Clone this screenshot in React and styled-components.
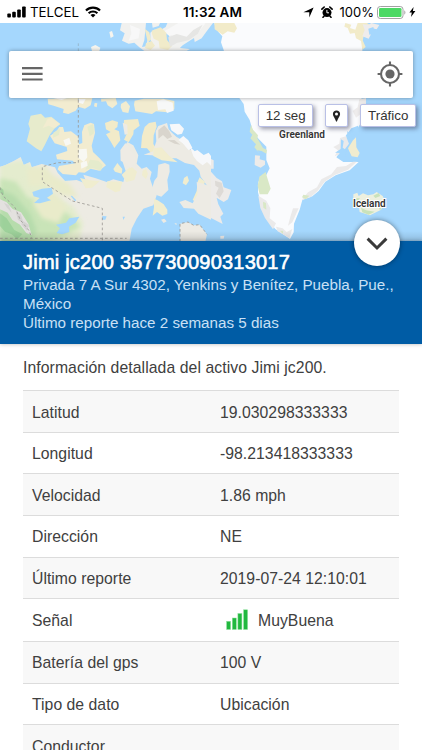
import React from "react";
import styled, { createGlobalStyle } from "styled-components";

const details = [
  { label: "Latitud", value: "19.030298333333" },
  { label: "Longitud", value: "-98.213418333333" },
  { label: "Velocidad", value: "1.86 mph" },
  { label: "Dirección", value: "NE" },
  { label: "Último reporte", value: "2019-07-24 12:10:01" },
  { label: "Señal", value: "MuyBuena", signal: true },
  { label: "Batería del gps", value: "100 V" },
  { label: "Tipo de dato", value: "Ubicación" },
  { label: "Conductor", value: "" }
];

const App = () => {
  return (
    <Screen>
      <GlobalStyle />
      <StatusBar />
      <MapArea>
        <MapDrawing />
        <SearchBar>
          <MenuIcon />
          <LocateIcon />
        </SearchBar>
        <MapControls>
          <MapButton>12 seg</MapButton>
          <MapButton $icon aria-label="Marcador">
            <PinIcon />
          </MapButton>
          <MapButton>Tráfico</MapButton>
        </MapControls>
      </MapArea>
      <AssetHeader>
        <CollapseButton aria-label="Cerrar">
          <ChevronIcon />
        </CollapseButton>
        <AssetName>Jimi jc200 357730090313017</AssetName>
        <AssetText>
          Privada 7 A Sur 4302, Yenkins y Benítez, Puebla, Pue., México
        </AssetText>
        <AssetText>Último reporte hace 2 semanas 5 dias</AssetText>
      </AssetHeader>
      <Details>
        <Intro>Información detallada del activo Jimi jc200.</Intro>
        <Table>
          {details.map((item, i) => (
            <Row key={item.label} $odd={i % 2 === 0} $tall={item.signal}>
              <Cell>{item.label}</Cell>
              <Cell>
                {item.signal && <SignalIcon />}
                {item.value}
              </Cell>
            </Row>
          ))}
        </Table>
      </Details>
    </Screen>
  );
};

export default App;

const StatusBar = () => (
  <Status>
    <StatusGroup>
      <svg width="19" height="12" viewBox="0 0 19 12">
        <rect x="0.3" y="7.6" width="3.6" height="3.9" rx="0.9" />
        <rect x="5.2" y="5.8" width="3.6" height="5.7" rx="0.9" />
        <rect x="10.2" y="3.4" width="3.6" height="8.1" rx="0.9" />
        <rect x="15.1" y="0.4" width="3.6" height="11.1" rx="0.9" />
      </svg>
      <Carrier>TELCEL</Carrier>
      <WifiSvg width="16" height="12" viewBox="0 0 16 12">
        <path d="M0.2 3.7a11 11 0 0 1 15.6 0l-1.5 1.6a8.9 8.9 0 0 0-12.6 0z" />
        <path d="M2.9 6.5a7.2 7.2 0 0 1 10.2 0l-1.5 1.5a5.1 5.1 0 0 0-7.2 0z" />
        <path d="M5.5 9.1a3.6 3.6 0 0 1 5 0L8 11.6z" />
      </WifiSvg>
    </StatusGroup>
    <Clock>11:32 AM</Clock>
    <StatusGroup>
      <svg width="11" height="11" viewBox="0 0 11 11">
        <path d="M10.6 0.4L6.3 10.6V5.2H0.4z" />
      </svg>
      <AlarmSvg width="12" height="12" viewBox="0 0 12 12">
        <circle cx="6" cy="6.6" r="4.5" />
        <path
          d="M0.9 3.2L3.2 1M11.1 3.2L8.8 1M3 10.2l-1 1.1M9 10.2l1 1.1"
          stroke="#000"
          strokeWidth="1.6"
          strokeLinecap="round"
        />
        <path d="M5.9 3.9v2.9H8" fill="none" stroke="#fff" strokeWidth="1" />
      </AlarmSvg>
      <Percent>100%</Percent>
      <BatterySvg width="29" height="13" viewBox="0 0 29 13">
        <rect
          x="0.5"
          y="0.5"
          width="25.5"
          height="12"
          rx="2.8"
          fill="#fff"
          stroke="#a2a2a2"
        />
        <rect x="2" y="2" width="22.5" height="9" rx="1.3" fill="#4cd964" />
        <path d="M27.3 4.3c1.5.7 1.5 3.7 0 4.4z" fill="#a2a2a2" />
      </BatterySvg>
      <svg width="7" height="10" viewBox="0 0 7 10">
        <path d="M4.6 0L0.4 5.6h2.4L2 10l4.4-5.9H3.9z" />
      </svg>
    </StatusGroup>
  </Status>
);

const MenuIcon = () => (
  <svg width="21" height="14" viewBox="0 0 21 14">
    <path d="M0 1.2h20.6M0 6.8h20.6M0 12.5h20.6" stroke="#666" strokeWidth="2.2" />
  </svg>
);

const LocateIcon = () => (
  <svg width="26" height="26" viewBox="0 0 26 26">
    <circle cx="13" cy="13" r="9" fill="none" stroke="#666" strokeWidth="2.1" />
    <circle cx="13" cy="13" r="4.6" fill="#666" />
    <path
      d="M13 0.6v3.6M13 21.8v3.6M0.6 13h3.6M21.8 13h3.6"
      stroke="#666"
      strokeWidth="2.1"
    />
  </svg>
);

const PinIcon = () => (
  <svg width="9" height="14" viewBox="0 0 9 14">
    <path
      fillRule="evenodd"
      fill="#222"
      d="M4.5 1.6C2.4 1.6 0.9 3 0.9 5C0.9 7.200 3.100 9.200 4 12.300c0.100 0.500 0.900 0.500 1 0C5.900 9.200 8.100 7.200 8.100 5C8.100 3 6.600 1.600 4.500 1.600zM4.500 3.500a1.500 1.500 0 1 1 0 3a1.500 1.500 0 0 1 0-3z"
    />
  </svg>
);

const ChevronIcon = () => (
  <svg width="22" height="14" viewBox="0 0 22 14">
    <path d="M1.6 1.6L11 11L20.4 1.6" fill="none" stroke="#3a3a3a" strokeWidth="3" />
  </svg>
);

const SignalIcon = () => (
  <SignalSvg width="23" height="22" viewBox="0 0 23 22">
    <g fill="#21b83f" stroke="#8fe09d" strokeWidth="0.5">
      <rect x="0.6" y="12.3" width="4" height="8.2" />
      <rect x="6.3" y="9" width="4" height="11.5" />
      <rect x="11.9" y="4.5" width="4" height="16" />
      <rect x="17.6" y="0.8" width="4" height="19.7" />
    </g>
  </SignalSvg>
);

/* Map units are a third of a pixel. */
const MapDrawing = () => (
  <MapSvg viewBox="0 69 1266 654" preserveAspectRatio="none">
    <defs>
      <linearGradient id="mapShade" x1="0" y1="0" x2="0" y2="1">
        <stop offset="0" stopColor="#000" stopOpacity="0" />
        <stop offset="1" stopColor="#000" stopOpacity="0.12" />
      </linearGradient>
      <filter id="soft" x="-10%" y="-10%" width="120%" height="120%">
        <feGaussianBlur stdDeviation="7" />
      </filter>
      <clipPath id="mainland">
        <path d="M0 200l15-4 25-12 22-13 9 24 19-9 5 16 30-10 40 10 8 16 22 25 35-3 32 13-12-29 35 10 35 12 20-8 30 8 8-30-10-30 4-45 10-15 18 10 15 30-5 25 15 15 15-5 15 15-5 20 10 30 10 20-10 30-30 10-20 30-15 30-7 40H0z" />
      </clipPath>
    </defs>
    <rect y="69" width="1266" height="654" fill="#a5d7fd" />

    {/* northern islands */}
    <g>
      <path fill="#f1f1ef" d="M365 69l-5 22 14 9-8 22 20 9 17-3 15 14 16 12 126-2 17-9-5-10 33-18 14-20 20-26z" />
      <path fill="#f8f8f8" d="M390 75l30 12-4 28-30 7 8-22zM535 69l82 0-28 36-40 12-37-12-8 18-16-5 6-25z" />
      <path fill="#a5d7fd" d="M438 69l18 0 2 14 18-5 5-11 22 0-6 14-14 8-20 0-12 9 0 20 8 16-9-3-7-12-5 20-12 2 7-20z" />
      <path fill="#a5d7fd" d="M498 100l10 8 4 22-8 8-6-18zM540 144l8-8 34-22 4 22-12 12z" />
      <path fill="#f1ebca" d="M455 92l27-10 17 16 2 22 15 18-12 12-25-5-3-22-15-7-5-14zM434 86l14 11 5 23-10 5-4-17zM438 129l17-6 10 14-13 13-17-6z" />
      <path fill="#e6e6e4" d="M505 112l25-10 30 8 20-20 28-16-15 28-28 19-35 8-20 12z" />
      <path fill="#f6f5ef" d="M273 141l13-6 15 8-3 10-22 0zM328 96l8-3 5 16-9 5z" />
      <path fill="#f2ecd0" d="M143 296l102-3 32 1-5 22-17 10-20-6-8 12-22 10-16-4 2-11-30-10-16-4zM284 309l8 1-2 12-8-3zM303 296l44-2 5 18-15 13-14-9-5-12-14 1zM363 312l15-9 12 16-5 20-17-3-6-14zM404 302l28-6 58 0 33 7 0 25-20 9-35-3-12 8-50-8-4-20z" />
      <path fill="#f7f8f8" d="M160 294l25 6 16-6zM235 297l22 0-8 15-13-4zM470 304l20-6 28 10 3 24-20 7-5-11-22 2z" />
      <path d="M235 130v170" stroke="#8fa9ba" strokeWidth="2" strokeDasharray="8 7" />
    </g>

    <g transform="translate(0 300)">
      <path fill="#edebe3" d="M0 200l15-4 25-12 22-13 9 24 19-9 5 16 30-10 40 10 8 16 22 25 35-3 32 13-12-29 35 10 35 12 20-8 30 8 8-30-10-30 4-45 10-15 18 10 15 30-5 25 15 15 15-5 15 15-5 20 10 30 10 20-10 30-30 10-20 30-15 30-7 40H0z" />
      <g clipPath="url(#mainland)">
        <path filter="url(#soft)" fill="#e4ecce" d="M0 190l70-10 60 40 30 65 60 35 30 50-15 60H0z" />
        <path filter="url(#soft)" fill="#c9e4b8" d="M0 235l48 10 35 48 70 15 55 36 32 35-40 26-90 35-110-18z" />
        <path filter="url(#soft)" fill="#b6dcac" d="M0 270l42 15 48 55 20 50-15 35-95 0z" />
        <path filter="url(#soft)" fill="#e9ebca" d="M80 205l56-8 25 30 45 22 30 43-50-5-45-30-54 0zM105 290l58-11 38 42-26 48-48-14-28-42z" />
        <path fill="#e3e1df" d="M0 298l20 9 18 20 25 10 22 34 10 34-16-6-19-25-23-14-14-22-23-10z" />
        <path fill="#d5d3d2" d="M12 308l14 7 9 23-14-15zM48 338l14 4 9 27-17-9zM68 362l20 14-8 16-16-19z" />
        <path fill="#89c98c" opacity=".55" d="M0 340l20 15 23 35 24 12-15 16-17-15-20-8-15-17zM0 260l10 9 2 15-12-5z" />
      </g>
      <path fill="#a5d7fd" d="M97 276l29-10 29-3 4 18-18 12 12 8-33 9-18-1 17-15-18-5zM168 374l30-6 10-13 30-5-11 18-20 12 1 16-22 7-16-4 10-14zM216 287l13 14-4 3-13-16zM307 348l13 1-4 10-10 0zM368 350l7 0-5 10z" />
      <path fill="#f0edcf" d="M240 234l30 7 29 3-23 19-19 2zM322 244l45 1-7 28-14 4-27-16zM365 224l12-11 16-14 18 16-8 25-24 6z" />

      <path fill="#e7ebcc" d="M92 47l31-6 12 12 19-3 27 22-18 14-14 19-15 31-10 18-16-9-28-21 10-38-5-14z" />
      <path fill="#f2ecd0" d="M143 56l12-3 25 19-18 13-16-8-18 7zM150 107l18-11 10-15 11 0 4 15 20-2 22 16 2 23 10-4-1-33 7-20 19-8 10 4 3 27-10 38 4 19 19 18 20 22-20 16-26-6-18 12-18-1-8 9-40-4-15-14 4-10 48-8-7-8-47-4-3-14 34-11-2-12-36-11z" />
      <path fill="#e5ebcc" d="M160 98l20-13-3 20-18 8zM270 179l25 3 13 13-5 17-25-8-22 5zM262 80l18-8 2 28-13 9z" />
      <path fill="#f8f8f3" d="M190 121l18-8 5 18-16 7zM237 148l23-2 2 26-11 14-16-13zM242 188l18-6 3 15-19 9z" />
      <path fill="#f2ebc9" d="M315 69l22-8 17 5-2 15-9 7 14 6 4 27-18 23-12-21-13-20 14-7-14-8zM372 60l42-3 5 20-18 14-1 12-14 24-14-8 8-17-9-24zM434 81l13-12 20-4 3 15-9 26-1 26 12 19-19 8-12-14-18-1 3-36z" />
      <path fill="#eeebe4" d="M368 68l14 6 1 28-9 2zM361 150l15-20 12 8 5 18 12 10-1 25-12 14-14-14-16-9z" />
      <path fill="#f0edcf" d="M340 207l12-18 15 18-2 14-20-6zM428 212l10-6 6 16-6 15-12-11z" />
      <path fill="#edebe4" d="M431 164l28-10 10-30-2-30 8-16 26-9 5 19 10 10 14 13 30 17 8 19 20 9 16 18 13-4 16 13 0 90-31-43-4-18-16-17-27-6-26-14-43-1-30-8zM475 194l20-5 13 5 1 21-7 25 3 30-21 20-15-5-14-16 8-27 9-12z" />
      <path fill="#d9d5cd" d="M475 90l18-14 15 18 8 16-14 7-13-12-14 11zM503 121l20-1 18 14-17-3z" />
      <path fill="#f1edcf" d="M460 145l24-3 24 26 25 19-48-6-25-13zM599 232l16 14-10 25 6 22-17 17-16-10 12-27 3-28zM552 234l10-7 5 15-9 14-10-6zM462 296l11 5 18 12 11 16 0 13-15 5-16-11-13 11 4-25z" />
      <path fill="#f7f8fa" d="M509 73l29-2 14 15-6 15-13 3-19-13zM535 120l15-12 15 13 12 22-11 8-18-21zM570 140l14 14 8-4 19 15 15-7 7 10 0 29-12-11-13 10-17-13-11-14z" />
      <path fill="#edebe4" d="M590 246l20 5 23 9v99l-38-18-13-15-31-2-13-18 18-6 22 10 15-28zM483 359l10-3 7 8-9 5zM523 371l6-2 1 6zM540 371l24-5 17 10 18-2 22 29-5 22h-75z" />
      <g fill="none" stroke="#9b9994" strokeWidth="2.5" strokeDasharray="8 7">
        <path d="M235 0v188h-62l-46 12v45l90 58 90 22v100" />
        <path d="M0 415h380M540 425v-54l24-5 17 10 18-2 22 29" />
        <path d="M0 263l9 25 18 16 19 20 15 36 27 33 7 22" />
      </g>
    </g>

    {/* Greenland, Baffin coast and Iceland */}
    <g transform="translate(633 0)">
      <path fill="#fafbfd" d="M10 69l4 15 9 13 11 12-4 18 8 23 20 74 27 70 13 18 3 23 15 25 10 35 15 20 25 25v40l10 25-10 20-24 20-1 32 11 45 16 35 25 30 44 30 11-20 1-26 17-42 8-29 30-11 19-16 20-28 31-19 42-15 27-25-46 0-21-14 12-17-6-14 19-17 8-20 27-13 18-29-4-29 4-94 0-140 12-35 20-28-9-18z" />
      <path fill="#f2ebc9" d="M10 69h60l8 16-8 13-20-4-15 10-24-16zM403 69l18 5-4 10 16 5 7-20 28 0 13 8-5 14-15 5-6 25 9 20-10 8-4-26-15-8-4-16-14 2-7-17-10-4z" />
      <path fill="#eeecec" d="M455 73l18 1 8-5 24 6-8 13-13-3-2 14-9 17-19-7 7-19zM445 298l20-4v27l-15 20-15 12-10-20 15-11z" />
      <path fill="#a5d7fd" d="M472 86l15-5 2 10 12-3-5 12-21 4zM421 385l20-8 5 20-6 16-13-9-8 27-15 9 8-23-8-10z" />
    </g>
    <g transform="translate(633 300)">
      <path fill="#edebe9" d="M0 177l8 4 0 25-8 0zM0 215l17 19 16 10 5 18 23 8-10 28-13 8-20-12-18-5zM0 260l16 30 6 23 15 28-9 9 7 22-35-18zM28 408l12-1-2 9-10 0zM132 166l15 1-1 11 16 4 0 12-13 9-18-8z" />
      <path fill="#dddad6" d="M12 242l20 6 6 26-12 20-11-13 8-18-10-6z" />
      <path fill="#d9e8c6" d="M120 74l6 15 15 17-2 9 17 29 12 6-2 11-14-8-16-3 12 12-18-20 5-9-17-18 6-11-8-9zM145 230l19-14 5 18 10 32-9 17-24 0-6-25z" />
      <path fill="#f1eccf" d="M411 145l15-24 9-9 1 30 10 17-6 13-18-3-6-13z" />
      <path fill="#ebeaea" d="M387 114l18-5 9 22-12 16-16 15-15 7 10-18-14-10 18-10zM437 185l-26 24-40 16-30 20-22 29-21 18-26 8 19-23 27-15 13-24 30-15 17-22 27-3 21-13zM142 287l24 15 12 23-2 30 19 15-9 18-24-34-14-30zM195 380l20 5 12 11 17-9-9 27-35-20zM246 325l17 0-19 42-13 10 7-27z" />
      <path fill="#d9e8c6" d="M277 284l18 3-10 11-12-6zM156 305l9 4 1 20-9-6zM207 392l10 0-2 9z" />
      <path fill="#a5d7fd" d="M390 118l8 5-3 20 15 10-8 5 6 14-15-4-14 7 7-16-14-1 17-11zM408 93l14 13 0 13-10-7z" />
      <path fill="#edf0df" d="M427 283l12-5 4 10 13-8 15 6 16-3 10-7 18 12 10 22-16 20-32 16-31-10-3-20-16-8z" />
      <path fill="#c9e2bb" d="M432 294l15 1-9 9zM450 323l15 8 26 4-18 9-19-7zM487 287l16-8 5 9-15 6zM504 324l13-7-10 14z" />
    </g>
    <rect y="693" width="1266" height="30" fill="url(#mapShade)" />
    <MapLabel x="906" y="414">Greenland</MapLabel>
    <MapLabel x="1108" y="622">Iceland</MapLabel>
  </MapSvg>
);

const GlobalStyle = createGlobalStyle`
  * {
    box-sizing: border-box;
  }

  body {
    margin: 0;
    background: #fff;
  }
`;

const Screen = styled.div`
  width: 422px;
  height: 750px;
  overflow: hidden;
  background: #fff;
  font-family: "Liberation Sans", Arial, sans-serif;
  color: #404040;
`;

const Status = styled.div`
  height: 23px;
  padding: 0 6px 0 7px;
  display: grid;
  grid-template-columns: 1fr auto 1fr;
  align-items: center;
  color: #000;
  font-family: Inter, sans-serif;
  font-size: 13.5px;
  line-height: 23px;
`;

const StatusGroup = styled.div`
  display: flex;
  align-items: center;

  &:last-child {
    justify-content: flex-end;
  }
`;

const Carrier = styled.span`
  margin: 1px 0 0 4px;
  font-size: 13.3px;
`;

const WifiSvg = styled.svg`
  margin-left: 6px;
`;

const Clock = styled.div`
  padding: 1px 0 0 2px;
  font-weight: 600;
  letter-spacing: 0.1px;
`;

const AlarmSvg = styled.svg`
  margin-left: 7px;
`;

const Percent = styled.span`
  margin: 1px 3px 0 7px;
  font-size: 13px;
`;

const BatterySvg = styled.svg`
  margin-right: 3px;
`;

const MapArea = styled.div`
  position: relative;
  height: 218px;
`;

const MapSvg = styled.svg`
  display: block;
  width: 422px;
  height: 218px;
`;

const MapLabel = styled.text`
  font-family: Roboto, sans-serif;
  font-size: 30px;
  font-weight: 600;
  text-anchor: middle;
  fill: #333;
  stroke: #fff;
  stroke-width: 6px;
  paint-order: stroke;
`;

const SearchBar = styled.div`
  position: absolute;
  top: 28px;
  left: 9px;
  right: 9px;
  height: 47px;
  padding: 0 10px 2px 13px;
  display: flex;
  align-items: center;
  justify-content: space-between;
  background: #fff;
  border-radius: 2px;
  box-shadow: 0 0 4px rgba(0, 0, 0, 0.35);
`;

const MapControls = styled.div`
  position: absolute;
  top: 81px;
  right: 6px;
  display: flex;
  gap: 12px;
`;

const MapButton = styled.button`
  height: 23px;
  padding: 0 ${props => (props.$icon ? "6px" : "6.7px")};
  display: flex;
  align-items: center;
  background: #fff;
  border: 1px solid #b9c0e6;
  border-radius: 2px;
  box-shadow: 2px 2px 4px rgba(60, 60, 90, 0.5);
  color: #333;
  font-family: inherit;
  font-size: 13.333px;
`;

const AssetHeader = styled.div`
  position: relative;
  height: 103px;
  padding: 9px 23px 0;
  background: #005ca5;
  color: #fff;
  box-shadow: 0 0 4px rgba(0, 0, 0, 0.3);
`;

const CollapseButton = styled.button`
  position: absolute;
  top: -21px;
  right: 22px;
  width: 46px;
  height: 46px;
  padding: 2px 0 0;
  display: flex;
  align-items: center;
  justify-content: center;
  background: #fff;
  border: 0;
  border-radius: 50%;
  box-shadow: 0 0 5px rgba(0, 0, 0, 0.45);
`;

const AssetName = styled.h1`
  margin: 0;
  font-size: 20px;
  font-weight: 400;
  line-height: 25px;
  letter-spacing: 0.22px;
  -webkit-text-stroke: 0.6px #fff;
`;

const AssetText = styled.p`
  margin: 0;
  color: #c9e0f5;
  font-size: 15.2px;
  line-height: 19px;
`;

const Details = styled.div`
  padding: 0 23px;
`;

const Intro = styled.p`
  margin: 0;
  height: 46.3px;
  padding-top: 14px;
  font-size: 15.75px;
  line-height: 20px;
  letter-spacing: 0.08px;
`;

const Table = styled.div`
  display: flex;
  flex-direction: column;
`;

const Row = styled.div`
  height: ${props => (props.$tall ? "42.8px" : "41.6px")};
  display: grid;
  grid-template-columns: 188px 1fr;
  align-items: center;
  background: ${props => (props.$odd ? "#f8f8f8" : "#fff")};
  border-top: 1px solid #dcdcdc;
`;

const Cell = styled.div`
  padding: 2px 0 0 9px;
  display: flex;
  align-items: center;
  font-size: 15.75px;
  line-height: 20px;
  letter-spacing: 0.03px;
  white-space: nowrap;
`;

const SignalSvg = styled.svg`
  margin: -2px 9px 0 6px;
`;
